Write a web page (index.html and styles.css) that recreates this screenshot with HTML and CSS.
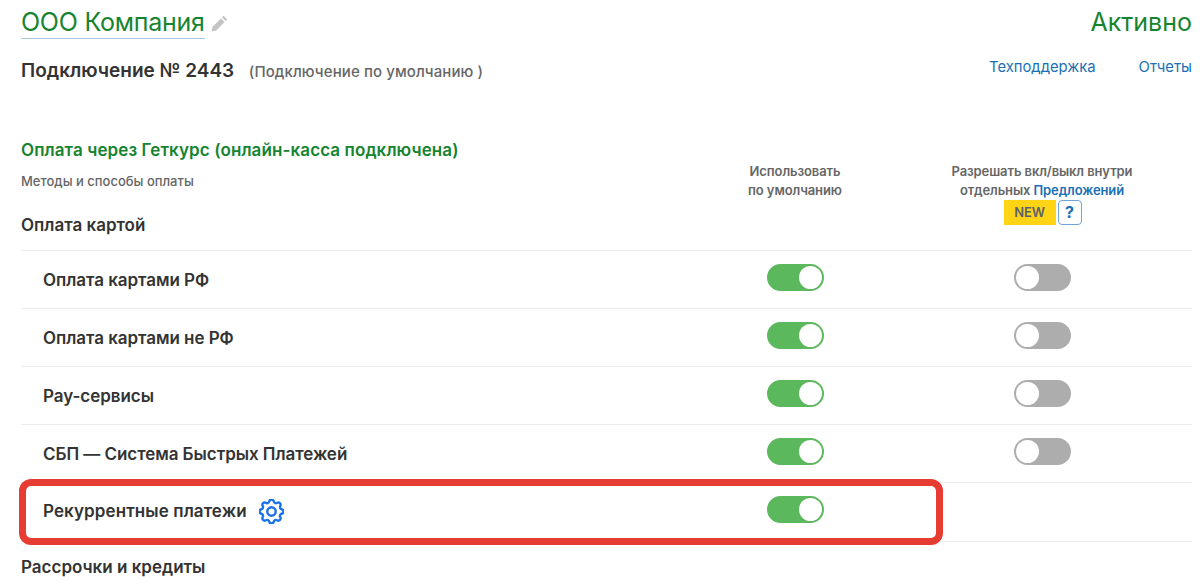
FILE: index.html
```html
<!DOCTYPE html>
<html lang="ru">
<head>
    <meta charset="UTF-8">
    <meta name="viewport" content="width=device-width, initial-scale=1.0">
    <title>Подключение № 2443</title>
    <link rel="stylesheet" href="styles.css">
</head>
<body>

    <div class="page">
        <!-- Шапка -->
        <div class="top-row">
            <div class="company">
                <span class="company-name">ООО Компания</span>
                <svg class="pencil" width="17" height="17" viewBox="0 0 17 17"><path d="M12.6 0.8 16.2 4.4 14.6 6 11 2.4ZM10 3.4 13.6 7 5.2 15.4 0.6 16.4 1.6 11.8Z" fill="#c4c4c4"/></svg>
            </div>
            <div class="status">Активно</div>
        </div>

        <div class="sub-row">
            <div class="connection">
                <span class="connection-num">Подключение № 2443</span>
                <span class="connection-note">(Подключение по умолчанию )</span>
            </div>
            <div class="links">
                <a href="#">Техподдержка</a>
                <a href="#">Отчеты</a>
            </div>
        </div>

        <!-- Заголовок таблицы -->
        <div class="table-head">
            <div class="head-left">
                <div class="section-title">Оплата через Геткурс (онлайн-касса подключена)</div>
                <div class="section-note">Методы и способы оплаты</div>
                <div class="group-title">Оплата картой</div>
            </div>
            <div class="head-col">Использовать<br>по умолчанию</div>
            <div class="head-col">
                Разрешать вкл/выкл внутри<br>отдельных <a href="#">Предложений</a>
                <div class="head-badges">
                    <span class="badge-new">NEW</span>
                    <span class="badge-help">?</span>
                </div>
            </div>
        </div>

        <!-- Методы оплаты -->
        <div class="row">
            <div class="row-label">Оплата картами РФ</div>
            <div class="row-cell"><span class="toggle on"></span></div>
            <div class="row-cell"><span class="toggle"></span></div>
        </div>
        <div class="row">
            <div class="row-label">Оплата картами не РФ</div>
            <div class="row-cell"><span class="toggle on"></span></div>
            <div class="row-cell"><span class="toggle"></span></div>
        </div>
        <div class="row">
            <div class="row-label">Pay-сервисы</div>
            <div class="row-cell"><span class="toggle on"></span></div>
            <div class="row-cell"><span class="toggle"></span></div>
        </div>
        <div class="row">
            <div class="row-label">СБП — Система Быстрых Платежей</div>
            <div class="row-cell"><span class="toggle on"></span></div>
            <div class="row-cell"><span class="toggle"></span></div>
        </div>
        <div class="row">
            <div class="row-label row-label-recurrent">
                Рекуррентные платежи
                <svg class="gear" width="25" height="25" viewBox="2.5 2.5 19 19" fill="none" stroke="#1a73e8" stroke-width="1.8" stroke-linecap="round" stroke-linejoin="round"><path d="M10.3 4.3c.4-1.8 3-1.8 3.4 0a1.7 1.7 0 0 0 2.6 1.1c1.5-.9 3.3.8 2.4 2.4a1.7 1.7 0 0 0 1 2.5c1.8.4 1.8 3 0 3.4a1.7 1.7 0 0 0-1 2.6c.9 1.5-.9 3.3-2.4 2.4a1.7 1.7 0 0 0-2.6 1c-.4 1.8-3 1.8-3.4 0a1.7 1.7 0 0 0-2.6-1c-1.5.9-3.3-.9-2.4-2.4a1.7 1.7 0 0 0-1-2.6c-1.8-.4-1.8-3 0-3.4a1.7 1.7 0 0 0 1-2.5c-.9-1.6.9-3.3 2.4-2.4a1.7 1.7 0 0 0 2.6-1.1Z"/><circle cx="12" cy="12" r="3.2"/></svg>
            </div>
            <div class="row-cell"><span class="toggle on"></span></div>
            <div class="row-cell"></div>
            <div class="highlight"></div>
        </div>

        <div class="group-title group-bottom">Рассрочки и кредиты</div>
    </div>

</body>
</html>
```

FILE: styles.css
```css
/* Общие стили */
body {
    margin: 0;
    background-color: #ffffff;
    font-family: Inter, "Noto Sans", sans-serif;
    color: #333;
    overflow: hidden;
}

a {
    color: #1a6fb5;
    text-decoration: none;
}

.page {
    padding: 0 8px 0 21px;
}

/* Шапка */
.top-row {
    display: flex;
    justify-content: space-between;
    align-items: flex-start;
    padding-top: 7px;
    height: 46px;
}

.company {
    display: flex;
    align-items: center;
    gap: 6px;
}

.company-name {
    font-size: 25px;
    line-height: 31px;
    color: #16842f;
    border-bottom: 1px solid #a9c9e4;
    letter-spacing: -0.25px;
}

.status {
    font-size: 25px;
    line-height: 31px;
    color: #16842f;
}

.sub-row {
    display: flex;
    justify-content: space-between;
    align-items: center;
    height: 36px;
}

.connection {
    margin-top: -2px;
}

.connection-num {
    font-size: 19px;
    font-weight: 600;
    margin-right: 10px;
}

.connection-note {
    font-size: 15px;
    font-weight: 500;
    letter-spacing: 0.1px;
    color: #666;
}

.links {
    display: flex;
    gap: 43px;
    font-size: 14.8px;
    margin-top: -8px;
}

/* Заголовок таблицы */
.table-head {
    display: grid;
    grid-template-columns: 677px 194px 300px;
    margin-top: 41px;
    height: 120px;
}

.section-title {
    font-size: 17px;
    line-height: 20px;
    font-weight: 600;
    letter-spacing: 0.1px;
    color: #16842f;
    margin-top: 10px;
}

.section-note {
    font-size: 13px;
    line-height: 16px;
    font-weight: 500;
    color: #666;
    margin-top: 13px;
}

.group-title {
    font-size: 17px;
    line-height: 22px;
    font-weight: 600;
    color: #333;
    margin-top: 25px;
}

.head-col {
    font-size: 13px;
    line-height: 19px;
    font-weight: 600;
    letter-spacing: -0.1px;
    color: #666;
    text-align: center;
    padding-top: 32px;
}

.head-col a {
    font-weight: 600;
}

.head-badges {
    display: flex;
    justify-content: center;
    align-items: center;
    gap: 2px;
    margin-left: 1px;
}

.badge-new {
    background-color: #ffd414;
    color: #5b6270;
    font-size: 13px;
    font-weight: 600;
    width: 52px;
    height: 25px;
    line-height: 25px;
}

.badge-help {
    box-sizing: border-box;
    width: 24px;
    height: 25px;
    line-height: 23px;
    border: 1px solid #6ea5d8;
    border-radius: 4px;
    color: #1a6fb5;
    font-size: 16px;
    font-weight: 700;
}

/* Строки */
.row {
    position: relative;
    display: grid;
    grid-template-columns: 677px 194px 300px;
    align-items: center;
    height: 57px;
    border-top: 1px solid #ececec;
}

.row-label {
    display: flex;
    align-items: center;
    padding-left: 22px;
    font-size: 17px;
    font-weight: 600;
    letter-spacing: -0.05px;
    color: #333;
}

.row-label-recurrent {
    margin-top: -2px;
    letter-spacing: 0.1px;
}

.gear {
    margin-left: 12px;
    margin-top: 2px;
}

.row-cell {
    display: flex;
    justify-content: center;
    padding-bottom: 4px;
}

.toggle {
    box-sizing: border-box;
    position: relative;
    display: block;
    width: 57px;
    height: 27px;
    border-radius: 14px;
    border: 2px solid #adadad;
    background-color: #adadad;
}

.toggle::after {
    content: "";
    position: absolute;
    top: 0;
    left: 0;
    width: 23px;
    height: 23px;
    border-radius: 50%;
    background-color: #ffffff;
}

.toggle.on {
    border-color: #5cb85c;
    background-color: #5cb85c;
}

.toggle.on::after {
    left: 30px;
}

/* Красная рамка поверх строки */
.highlight {
    position: absolute;
    left: -2px;
    top: -4px;
    box-sizing: border-box;
    width: 924px;
    height: 66px;
    border: 7px solid #e63c31;
    border-radius: 12px;
}

.group-bottom {
    border-top: 1px solid #ececec;
    padding-top: 14px;
    margin-top: 1px;
}
```
